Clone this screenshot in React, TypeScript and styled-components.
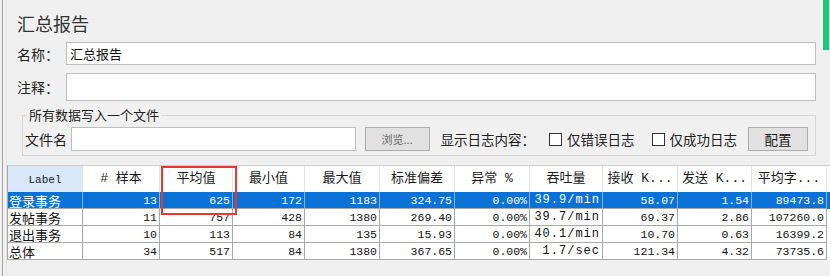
import React from "react";
import styled, { createGlobalStyle } from "styled-components";

const GlobalStyle = createGlobalStyle`
  html, body { margin: 0; padding: 0; background: #f0f0f0; }
  body { font-family: "Noto Sans CJK SC", "Noto Sans", sans-serif; }
  * { box-sizing: border-box; }
`;

const Window = styled.div`
  width: 830px;
  height: 276px;
  display: flex;
  background: #f0f0f0;
  overflow: hidden;
  color: #1a1a1a;
`;

const LeftRail = styled.div`
  flex: 0 0 auto;
  width: 5px;
  margin-left: 2px;
  border-left: 1px solid #a3a3a3;
  border-right: 1px solid #e4e4e4;
`;

const Main = styled.div`
  flex: 1;
  min-width: 0;
  display: flex;
  flex-direction: column;
`;

const TopSection = styled.div`
  display: flex;
`;

const Form = styled.div`
  flex: 1;
  min-width: 0;
  padding: 11px 7px 0 10px;
  display: flex;
  flex-direction: column;
`;

const SideRail = styled.div`
  flex: 0 0 7px;
`;

const GreenBar = styled.div`
  width: 6px;
  height: 50px;
  background: #1cc77a;
`;

const Title = styled.div`
  font-size: 18px;
  line-height: 24px;
  height: 24px;
  color: #333;
`;

const FieldRow = styled.div<{ $mt: number }>`
  display: flex;
  align-items: center;
  margin-top: ${(p) => p.$mt}px;
`;

const FieldLabel = styled.div`
  flex: 0 0 49px;
  font-size: 14px;
  color: #222;
`;

const TextInput = styled.div<{ $h: number }>`
  flex: 1;
  height: ${(p) => p.$h}px;
  border: 1px solid #bdbdbd;
  background: #fff;
  font-size: 13px;
  line-height: ${(p) => p.$h - 2}px;
  padding: 0 3px;
  color: #111;
`;

const Group = styled.fieldset`
  margin: 6px 0 0 5px;
  padding: 4px 7px 4px 2px;
  border: 1px solid #d6d6d6;
  min-width: 0;
`;

const Legend = styled.legend`
  font-size: 13px;
  line-height: 16px;
  padding: 0 2px;
  margin-left: 2px;
  color: #222;
`;

const FileRow = styled.div`
  display: flex;
  align-items: center;
  height: 24px;
`;

const SmallLabel = styled.span<{ $ml?: number; $size?: number }>`
  font-size: ${(p) => p.$size ?? 13.5}px;
  color: #222;
  white-space: nowrap;
  margin-left: ${(p) => p.$ml ?? 0}px;
`;

const FileInput = styled.div`
  width: 290px;
  height: 24px;
  margin-left: 4px;
  border: 1px solid #bdbdbd;
  background: #fff;
`;

const Button = styled.div<{ $w: number; $ml: number; $muted?: boolean }>`
  width: ${(p) => p.$w}px;
  height: 24px;
  margin-left: ${(p) => p.$ml}px;
  background: #e1e1e1;
  border: 1px solid #adadad;
  display: flex;
  align-items: center;
  justify-content: center;
  font-size: ${(p) => (p.$muted ? 11 : 13.5)}px;
  color: ${(p) => (p.$muted ? "#666" : "#1a1a1a")};
`;

const Check = styled.span<{ $ml: number }>`
  display: inline-block;
  width: 13px;
  height: 13px;
  border: 1px solid #333;
  background: #fff;
  margin-left: ${(p) => p.$ml}px;
  margin-right: 5px;
  flex: 0 0 auto;
`;

const Table = styled.div`
  position: relative;
  margin-top: 9px;
  border-top: 1px solid #cdcdcd;
  border-left: 1px solid #a8a8a8;
`;

const COLS = "75px 77px 73px 72px 75px 75px 75px 73px 75px 74px 75px";

const HeaderRow = styled.div`
  display: grid;
  grid-template-columns: ${COLS};
  height: 26px;
  background: #fff;
`;

const HeaderCell = styled.div<{ $accent?: boolean; $mono?: boolean }>`
  display: flex;
  align-items: center;
  justify-content: center;
  white-space: nowrap;
  overflow: hidden;
  border-right: 1px solid #e2e2e2;
  background: ${(p) => (p.$accent ? "#d9e8f8" : "#fff")};
  font-family: "Liberation Mono", "Noto Sans CJK SC", monospace;
  font-size: ${(p) => (p.$mono ? 11 : 13)}px;
  line-height: 18px;
  padding-top: ${(p) => (p.$mono ? 2 : 0)}px;
  color: #1a1a1a;
`;

const DataRow = styled.div<{ $selected?: boolean }>`
  display: grid;
  grid-template-columns: ${COLS};
  height: 17px;
  background: ${(p) => (p.$selected ? "#0a72d6" : "#fff")};
  color: ${(p) => (p.$selected ? "#fff" : "#111")};
`;

type Kind = "label" | "num" | "rate";

const DataCell = styled.div<{ $selected?: boolean; $kind: Kind }>`
  border-right: 1px solid ${(p) => (p.$selected ? "#7fb4e8" : "#a8a8a8")};
  border-bottom: 1px solid #a8a8a8;
  white-space: nowrap;
  display: flex;
  align-items: center;
  justify-content: ${(p) => (p.$kind === "label" ? "flex-start" : "flex-end")};
  padding: ${(p) => (p.$kind === "label" ? "0 0 0 1px" : "0 2px 0 0")};
  font-family: ${(p) =>
    p.$kind === "label"
      ? `"Noto Sans CJK SC", sans-serif`
      : `"Liberation Mono", "DejaVu Sans Mono", monospace`};
  font-size: ${(p) => (p.$kind === "label" ? 13 : p.$kind === "rate" ? 12 : 11.5)}px;
  letter-spacing: ${(p) => (p.$kind === "rate" ? 1 : 0)}px;
  line-height: 15px;
`;

const Highlight = styled.div`
  position: absolute;
  left: 153px;
  top: 0px;
  width: 76px;
  height: 49px;
  border: 2px solid #e5382e;
  pointer-events: none;
`;

const headers: { text: string; accent?: boolean; mono?: boolean }[] = [
  { text: "Label", accent: true, mono: true },
  { text: "# 样本" },
  { text: "平均值" },
  { text: "最小值" },
  { text: "最大值" },
  { text: "标准偏差" },
  { text: "异常 %" },
  { text: "吞吐量" },
  { text: "接收 K..." },
  { text: "发送 K..." },
  { text: "平均字..." },
];

const rows: string[][] = [
  ["登录事务", "13", "625", "172", "1183", "324.75", "0.00%", "39.9/min", "58.07", "1.54", "89473.8"],
  ["发帖事务", "11", "757", "428", "1380", "269.40", "0.00%", "39.7/min", "69.37", "2.86", "107260.0"],
  ["退出事务", "10", "113", "84", "135", "15.93", "0.00%", "40.1/min", "10.70", "0.63", "16399.2"],
  ["总体", "34", "517", "84", "1380", "367.65", "0.00%", "1.7/sec", "121.34", "4.32", "73735.6"],
];

export default function App() {
  return (
    <>
      <GlobalStyle />
      <Window>
        <LeftRail />
        <Main>
          <TopSection>
            <Form>
              <Title>汇总报告</Title>
              <FieldRow $mt={7}>
                <FieldLabel>名称：</FieldLabel>
                <TextInput $h={23}>汇总报告</TextInput>
              </FieldRow>
              <FieldRow $mt={8}>
                <FieldLabel>注释：</FieldLabel>
                <TextInput $h={28} />
              </FieldRow>
              <Group>
                <Legend>所有数据写入一个文件</Legend>
                <FileRow>
                  <SmallLabel $size={14}>文件名</SmallLabel>
                  <FileInput />
                  <Button $w={66} $ml={9} $muted>
                    浏览...
                  </Button>
                  <SmallLabel $ml={11}>显示日志内容：</SmallLabel>
                  <Check $ml={14} />
                  <SmallLabel>仅错误日志</SmallLabel>
                  <Check $ml={17} />
                  <SmallLabel>仅成功日志</SmallLabel>
                  <Button $w={61} $ml={11}>
                    配置
                  </Button>
                </FileRow>
              </Group>
            </Form>
            <SideRail>
              <GreenBar />
            </SideRail>
          </TopSection>
          <Table>
            <HeaderRow>
              {headers.map((h) => (
                <HeaderCell key={h.text} $accent={h.accent} $mono={h.mono}>
                  {h.text}
                </HeaderCell>
              ))}
            </HeaderRow>
            {rows.map((r, i) => (
              <DataRow key={r[0]} $selected={i === 0}>
                {r.map((c, j) => (
                  <DataCell
                    key={j}
                    $selected={i === 0}
                    $kind={j === 0 ? "label" : j === 7 ? "rate" : "num"}
                  >
                    {c}
                  </DataCell>
                ))}
              </DataRow>
            ))}
            <Highlight />
          </Table>
        </Main>
      </Window>
    </>
  );
}
